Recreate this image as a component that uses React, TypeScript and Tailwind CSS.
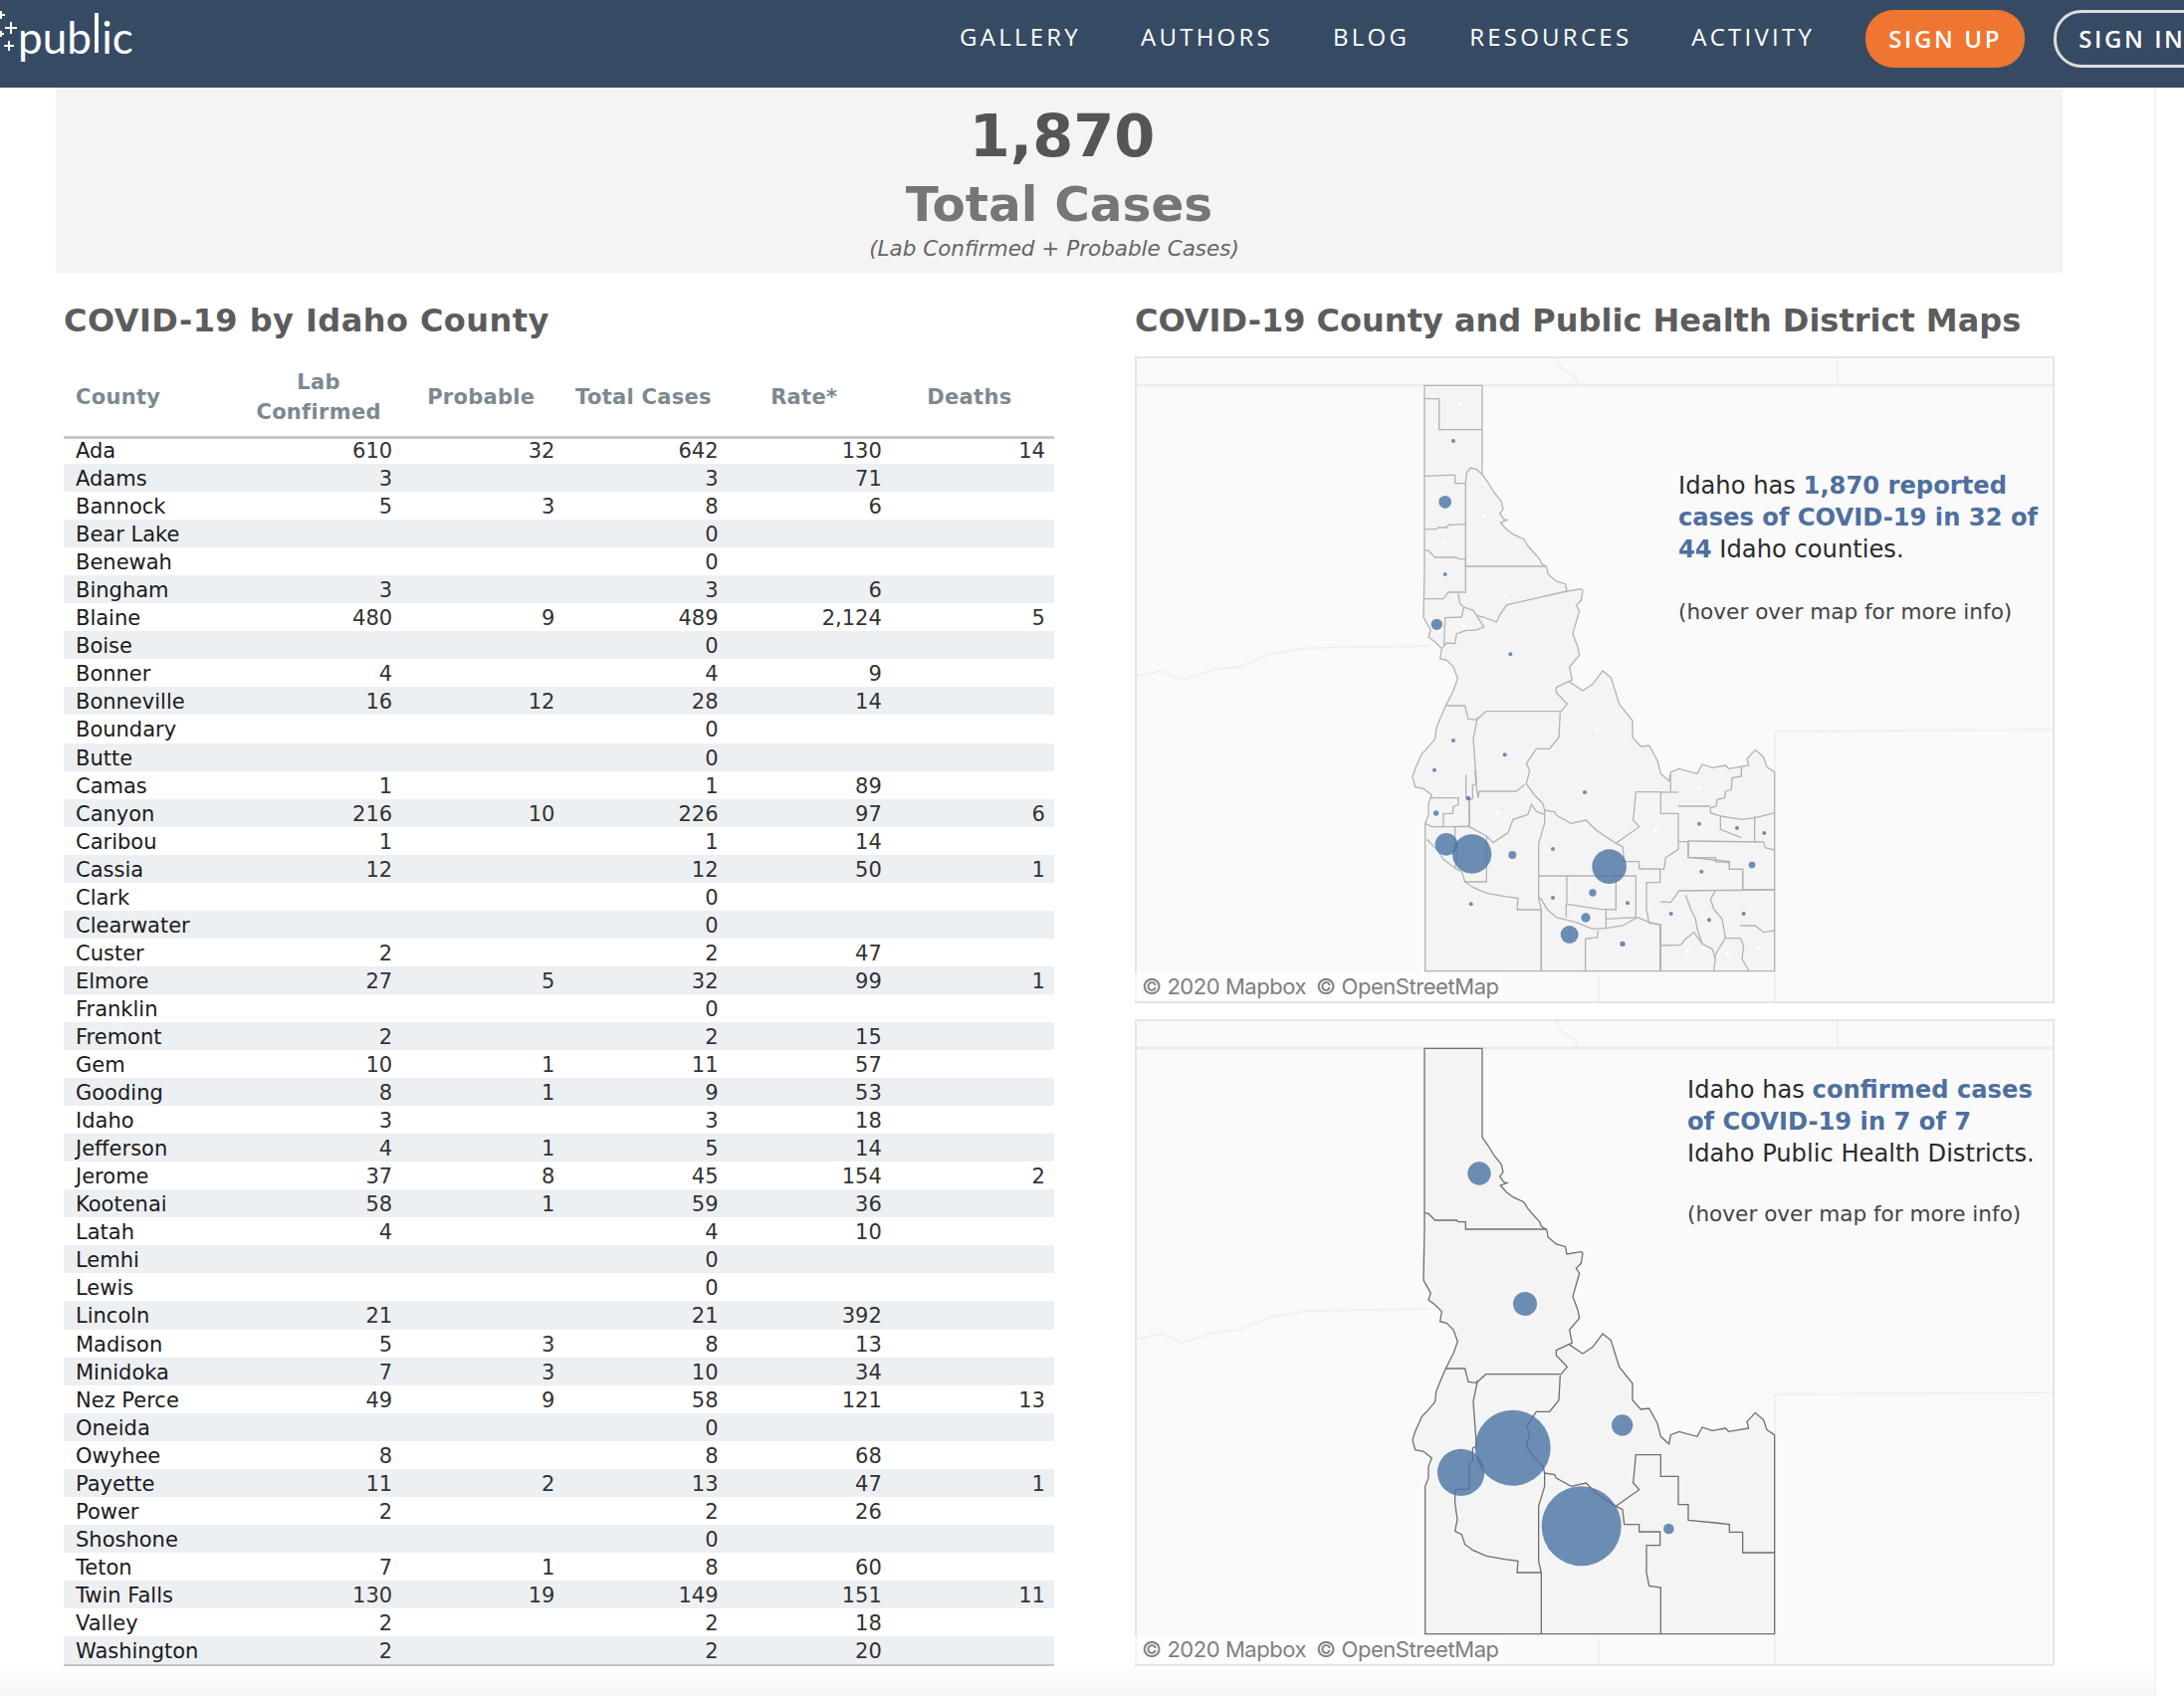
import type { ReactNode } from "react";

const navItems = ["GALLERY", "AUTHORS", "BLOG", "RESOURCES", "ACTIVITY"];

// county, lab confirmed, probable, total, rate, deaths
const counties: [string, string, string, string, string, string][] = [
  ["Ada", "610", "32", "642", "130", "14"],
  ["Adams", "3", "", "3", "71", ""],
  ["Bannock", "5", "3", "8", "6", ""],
  ["Bear Lake", "", "", "0", "", ""],
  ["Benewah", "", "", "0", "", ""],
  ["Bingham", "3", "", "3", "6", ""],
  ["Blaine", "480", "9", "489", "2,124", "5"],
  ["Boise", "", "", "0", "", ""],
  ["Bonner", "4", "", "4", "9", ""],
  ["Bonneville", "16", "12", "28", "14", ""],
  ["Boundary", "", "", "0", "", ""],
  ["Butte", "", "", "0", "", ""],
  ["Camas", "1", "", "1", "89", ""],
  ["Canyon", "216", "10", "226", "97", "6"],
  ["Caribou", "1", "", "1", "14", ""],
  ["Cassia", "12", "", "12", "50", "1"],
  ["Clark", "", "", "0", "", ""],
  ["Clearwater", "", "", "0", "", ""],
  ["Custer", "2", "", "2", "47", ""],
  ["Elmore", "27", "5", "32", "99", "1"],
  ["Franklin", "", "", "0", "", ""],
  ["Fremont", "2", "", "2", "15", ""],
  ["Gem", "10", "1", "11", "57", ""],
  ["Gooding", "8", "1", "9", "53", ""],
  ["Idaho", "3", "", "3", "18", ""],
  ["Jefferson", "4", "1", "5", "14", ""],
  ["Jerome", "37", "8", "45", "154", "2"],
  ["Kootenai", "58", "1", "59", "36", ""],
  ["Latah", "4", "", "4", "10", ""],
  ["Lemhi", "", "", "0", "", ""],
  ["Lewis", "", "", "0", "", ""],
  ["Lincoln", "21", "", "21", "392", ""],
  ["Madison", "5", "3", "8", "13", ""],
  ["Minidoka", "7", "3", "10", "34", ""],
  ["Nez Perce", "49", "9", "58", "121", "13"],
  ["Oneida", "", "", "0", "", ""],
  ["Owyhee", "8", "", "8", "68", ""],
  ["Payette", "11", "2", "13", "47", "1"],
  ["Power", "2", "", "2", "26", ""],
  ["Shoshone", "", "", "0", "", ""],
  ["Teton", "7", "1", "8", "60", ""],
  ["Twin Falls", "130", "19", "149", "151", "11"],
  ["Valley", "2", "", "2", "18", ""],
  ["Washington", "2", "", "2", "20", ""],
];

const STATE =
  "M93 22H267V290L285 315 303 345 325 372 330 395 320 408 332 425 342 428 322 435 340 455 360 470 392 485 405 505 422 525 440 545 445 558 462 570 465 590 490 612 518 620 522 642 565 635 570 640 565 670 550 685 560 700 550 735 540 770 555 810 560 835 530 870 538 910 528 914 570 942 600 922 630 882 655 902 680 982 720 1032 720 1082 745 1110 770 1107 795 1152 805 1192 830 1214 835 1187 860 1177 915 1192 930 1164 960 1174 1000 1167 1010 1177 1070 1167 1065 1147 1090 1120 1115 1142 1125 1172 1148 1187V1787H95V1342L105 1317 105 1282 115 1257 90 1237 65 1232 57 1202 65 1177 85 1132 100 1117 125 1087 128 1057 140 1027 157 987 180 942 193 905 180 870 160 850 140 845 145 815 125 795 105 780 112 760 90 720 93 570Z";

// the lines between the seven health districts, also drawn on the county map
const DISTRICTS = [
  "M93 518L105 520 125 540 190 540 195 545 217 545V567H462",
  "M157 987H215L225 1027 250 1030 278 1004 H505L523 982 490 947 490 932 528 914",
  "M502 1007L498 1082 470 1117 430 1117 400 1162 410 1182 400 1222 425 1257 450 1282 455 1302",
  "M253 1022L240 1087 250 1222 238 1227 238 1267 228 1272 228 1350 185 1352 185 1392 192 1442 185 1477 205 1487 215 1517 240 1535 280 1552 335 1562 375 1567 372 1602H445",
  "M445 1787V1602L437 1567V1402L455 1342V1302L485 1307 490 1317 535 1342 580 1332 610 1362 670 1402 690 1412 695 1457H740V1479H803V1520H762V1602L770 1642 805 1647V1787",
  "M670 1402L740 1352 722 1332 730 1247H805V1312H858V1397H888V1444L970 1452 1012 1457V1480H1052V1542H1148",
];

const COUNTY_LINES_NORTH = [
  "M93 62H137V155H267",
  "M93 295L163 292H185V317H217V645H165L150 665H93",
  "M217 317L220 285 232 270 250 275 267 290",
  "M93 455H130L135 450H160L165 442 217 440",
  "M195 650L200 680 212 690 205 720 155 722 152 805",
  "M212 690L240 700 250 715 270 720 310 735 322 710 342 683 522 642",
  "M250 715L272 750 245 760 220 760 190 770 185 800 160 798 145 815",
];

// these use the coordinates of the southern crop, shifted down by 1080
const COUNTY_LINES_SOUTH = [
  "M108 185H195V205L180 212 178 232H150V272",
  "M95 262L115 272H228V185H218V115",
  "M245 100L250 155 255 185 258 165H370L395 145",
  "M228 272L280 300 300 320 345 290 360 250 405 235 415 205 430 225 455 235",
  "M100 310L130 340 150 370 185 397",
  "M280 300V438H212",
  "M437 420H730V545L640 550",
  "M522 420V505L620 520 670 522V420",
  "M640 522V578",
  "M437 485L445 490 462 520 490 545 550 560 600 580 640 578 690 570 735 545 770 560 803 567",
  "M520 505V545",
  "M445 522V705",
  "M578 705V610L615 605V585",
  "M803 567V705",
  "M805 168H858",
  "M835 165V115",
  "M1048 90V120L1020 125 1018 160 1000 165 998 185 975 190 972 210 955 215 955 230 985 240V280L1048 305",
  "M985 240L1050 250 1090 245 1148 230",
  "M1088 240V315",
  "M858 210H955",
  "M888 315L1115 318 1120 335 1148 342",
  "M888 315V365H970V378L1012 380V400H1052V462",
  "M858 315V340L820 365 815 400H805",
  "M805 498L835 500 850 480 860 465 1148 462",
  "M805 630L865 628 880 610 905 590 930 625 960 640 970 668 965 705",
  "M880 478L895 520 910 550 915 580 930 625",
  "M970 465L955 490 965 520 990 550 1000 608H1045L1055 630 1050 670 1070 705",
  "M1000 608L975 648 965 668",
  "M1045 570H1090L1115 590 1148 585",
];

// x, y, r
const NORTH_DOTS: [number, number, number][] = [
  [180, 189, 6],
  [155, 373, 19],
  [155, 591, 6],
  [130, 742, 17],
  [352, 832, 6],
];

const SOUTH_DOTS: [number, number, number][] = [
  [159, 325, 34],
  [236, 354, 59],
  [358, 357, 12],
  [650, 392, 52],
  [600, 471, 11],
  [579, 546, 14],
  [530, 597, 27],
  [690, 625, 8],
  [233, 505, 6],
  [128, 231, 8],
  [225, 186, 7],
  [123, 101, 6],
  [335, 55, 6],
  [180, 12, 6],
  [576, 168, 6],
  [480, 339, 6],
  [480, 486, 6],
  [705, 502, 6],
  [921, 263, 6],
  [1035, 276, 6],
  [1117, 291, 6],
  [928, 407, 6],
  [1080, 387, 10],
  [836, 534, 6],
  [951, 553, 6],
  [1055, 534, 6],
];

const EMPTY_COUNTIES: [number, number][] = [
  [201, 76],
  [273, 418],
  [155, 493],
  [337, 653],
  [212, 747],
  [612, 1063],
  [315, 1311],
  [790, 1363],
  [921, 1237],
  [885, 1727],
  [1007, 1735],
  [1100, 1715],
];

const DISTRICT_DOTS: [number, number, number][] = [
  [258, 399, 35],
  [396, 792, 36],
  [203, 1300, 71],
  [359, 1226, 114],
  [566, 1462, 120],
  [689, 1158, 32],
  [829, 1470, 16],
];

function Lines({ items, stroke }: { items: string[]; stroke: string }) {
  return (
    <>
      {items.map((d) => (
        <path key={d} d={d} fill="none" stroke={stroke} strokeWidth={1.3} vectorEffect="non-scaling-stroke" />
      ))}
    </>
  );
}

function Dots({ items }: { items: [number, number, number][] }) {
  return (
    <>
      {items.map(([x, y, r]) => (
        <circle key={`${x}-${y}`} cx={x} cy={y} r={r} fill="#4e76a5" fillOpacity={0.82} />
      ))}
    </>
  );
}

function IdahoMap({ districts }: { districts?: boolean }) {
  const stroke = districts ? "#6f6f6f" : "#b3b3b3";
  return (
    <svg viewBox="1140 358 924 650" className="block h-full w-full">
      <g fill="none" stroke="#f1f1f1" strokeWidth={2}>
        <path d="M1140 387H2064" stroke="#ececec" strokeWidth={3} />
        <path d="M1846 358V387M1783 735V1008M1783 735L2064 733M1606 980V1008M1142 679L1167 674 1188 683 1222 672 1246 670 1277 657 1314 651 1436 649" />
        <path d="M1562 358L1570 372 1582 378 1586 387" />
      </g>
      <g transform="translate(1400 380) scale(.33333)">
        <path d={STATE} fill="#f4f4f4" stroke={stroke} strokeWidth={1.3} vectorEffect="non-scaling-stroke" />
        {districts ? (
          <>
            <Lines items={DISTRICTS} stroke={stroke} />
            <Dots items={DISTRICT_DOTS} />
          </>
        ) : (
          <>
            <Lines items={COUNTY_LINES_NORTH} stroke={stroke} />
            <Lines items={DISTRICTS} stroke={stroke} />
            <g transform="translate(0 1080)">
              <Lines items={COUNTY_LINES_SOUTH} stroke={stroke} />
            </g>
            {EMPTY_COUNTIES.map(([x, y]) => (
              <circle key={`${x}-${y}`} cx={x} cy={y} r={6} fill="#ffffff" />
            ))}
            <Dots items={NORTH_DOTS} />
            <g transform="translate(0 1080)">
              <Dots items={SOUTH_DOTS} />
            </g>
          </>
        )}
      </g>
    </svg>
  );
}

function MapCard({ districts, children }: { districts?: boolean; children: ReactNode }) {
  return (
    <div className="relative h-[650px] w-[924px] bg-[#fafafa] outline-2 -outline-offset-2 outline-[#e6e6e6]">
      <IdahoMap districts={districts} />
      {children}
      <div className="absolute bottom-[3px] left-0 flex h-[27px] w-[370px] items-center gap-[10px] bg-white/60 pl-[7px] font-['Inter',sans-serif] text-[22px] tracking-[-0.45px] text-[#7f7f7f]">
        <span>© 2020 Mapbox</span>
        <span>© OpenStreetMap</span>
      </div>
    </div>
  );
}

function Blue({ children }: { children: ReactNode }) {
  return <span className="font-bold text-[#4e6f9f]">{children}</span>;
}

function Plus({ x, y, size = 6 }: { x: number; y: number; size?: number }) {
  return <path d={`M${x - size} ${y}H${x + size}M${x} ${y - size}V${y + size}`} stroke="#ffffff" strokeWidth={2} />;
}

function Header() {
  return (
    <header className="flex h-[88px] w-full items-start overflow-hidden bg-[#364b63] text-white">
      <div className="relative flex h-full w-[140px] shrink-0">
        <svg viewBox="0 0 30 60" className="absolute left-0 top-0 h-[60px] w-[30px]">
          <Plus x={1} y={15} size={4} />
          <Plus x={11} y={28} />
          <Plus x={1} y={34} size={3} />
          <Plus x={9} y={46} size={5} />
        </svg>
        <span className="absolute left-[18px] top-[7px] font-['Lato',sans-serif] text-[44px] font-normal leading-[60px]">
          pub<span className="inline-block origin-bottom scale-y-125 leading-[44px]">l</span>ic
        </span>
      </div>
      <nav className="ml-[824px] flex h-full items-center gap-[60px] font-['Open_Sans',sans-serif] text-[24px] font-medium tracking-[3.25px]">
        {navItems.map((item) => (
          <a key={item} className="-mt-[14px] whitespace-nowrap">
            {item}
          </a>
        ))}
      </nav>
      <a className="ml-[51px] mt-[10px] flex h-[58px] w-[160px] shrink-0 items-center justify-center rounded-[28px] bg-[#ef7630] font-['Open_Sans',sans-serif] text-[24px] font-semibold tracking-[2.6px]">
        SIGN UP
      </a>
      <a className="ml-[29px] mt-[10px] flex h-[58px] w-[170px] shrink-0 items-center rounded-[28px] border-[3px] border-[#dddddd] pl-[22px] font-['Open_Sans',sans-serif] text-[24px] font-semibold tracking-[2.6px]">
        SIGN IN
      </a>
    </header>
  );
}

function CountyTable() {
  const headCell = "flex items-center justify-center text-center";
  return (
    <div className="w-[995px]">
      {/* the rule sits over the top of the first row */}
      <div className="relative z-10 -mb-[3px] grid h-[83px] grid-cols-[174px_repeat(5,1fr)] border-b-[3px] border-[#c8c8c8] pt-[1px] text-[21px] font-bold leading-[30px] tracking-[0.3px] text-[#7d8891]">
        <div className="flex items-center pl-[12px]">County</div>
        <div className={headCell}>
          Lab
          <br />
          Confirmed
        </div>
        <div className={`${headCell} pr-[2px]`}>Probable</div>
        <div className={`${headCell} pr-[4px]`}>Total Cases</div>
        <div className={`${headCell} pr-[10px]`}>Rate*</div>
        <div className={`${headCell} pr-[6px]`}>Deaths</div>
      </div>
      {counties.map(([name, ...values], i) => (
        <div
          key={name}
          className={`grid h-[28.05px] grid-cols-[174px_repeat(5,1fr)] items-center pt-[2px] text-[21px] leading-[26px] ${
            i % 2 === 1 ? "bg-[#edf0f3]" : ""
          }`}
        >
          <div className="whitespace-nowrap pl-[12px] text-[#1a1a1a]">{name}</div>
          {values.map((value, j) => (
            <div key={j} className={`text-right text-[#333333] ${j === 0 ? "pr-[8px]" : "pr-[9px]"}`}>
              {value}
            </div>
          ))}
        </div>
      ))}
      <div className="h-[3px] bg-[#c4c4c4]" />
    </div>
  );
}

export default function App() {
  return (
    <div className="h-[1704px] w-[2194px] overflow-hidden bg-white font-['DejaVu_Sans',sans-serif]">
      <Header />
      <div className="relative h-[1616px] w-[2166px] border-r-2 border-[#f3f3f3]">
        <section className="ml-[56px] flex h-[186px] w-[2016px] flex-col items-center bg-[#f4f4f4]">
          <div className="mt-[15px] pl-[6px] text-[59px] font-bold leading-[68px] text-[#555555]">1,870</div>
          <div className="text-[48.5px] font-bold leading-[68px] text-[#767676]">Total Cases</div>
          <div className="-ml-[10px] -mt-[2px] text-[21.5px] italic leading-[26px] text-[#666666]">
            (Lab Confirmed + Probable Cases)
          </div>
        </section>

        <div className="mt-[24px] flex">
          <div className="ml-[64px] w-[1076px]">
            <h2 className="text-[32px] font-bold leading-[48px] tracking-[0.45px] text-[#5c5c5c]">
              COVID-19 by Idaho County
            </h2>
            <div className="mt-[12px]">
              <CountyTable />
            </div>
          </div>
          <div>
            <h2 className="text-[32px] font-bold leading-[48px] text-[#5c5c5c]">
              COVID-19 County and Public Health District Maps
            </h2>
            <div className="mt-[12px] flex flex-col gap-[16px]">
              <MapCard>
                <div className="absolute left-[546px] top-[114px] whitespace-nowrap text-[24.2px] leading-[32px] text-[#2b2b2b]">
                  <p>
                    Idaho has <Blue>1,870 reported</Blue>
                    <br />
                    <Blue>cases of COVID-19 in 32 of</Blue>
                    <br />
                    <Blue>44</Blue> Idaho counties.
                  </p>
                  <p className="mt-[31px] text-[21.6px] text-[#444444]">(hover over map for more info)</p>
                </div>
              </MapCard>
              <MapCard districts>
                <div className="absolute left-[555px] top-[55px] whitespace-nowrap text-[24.2px] leading-[32px] text-[#2b2b2b]">
                  <p>
                    Idaho has <Blue>confirmed cases</Blue>
                    <br />
                    <Blue>of COVID-19 in 7 of 7</Blue>
                    <br />
                    Idaho Public Health Districts.
                  </p>
                  <p className="mt-[29px] text-[21.6px] text-[#444444]">(hover over map for more info)</p>
                </div>
              </MapCard>
            </div>
          </div>
        </div>
        <div className="absolute inset-x-0 bottom-0 h-[30px] bg-gradient-to-b from-white to-[#f7f7f7]" />
      </div>
    </div>
  );
}
